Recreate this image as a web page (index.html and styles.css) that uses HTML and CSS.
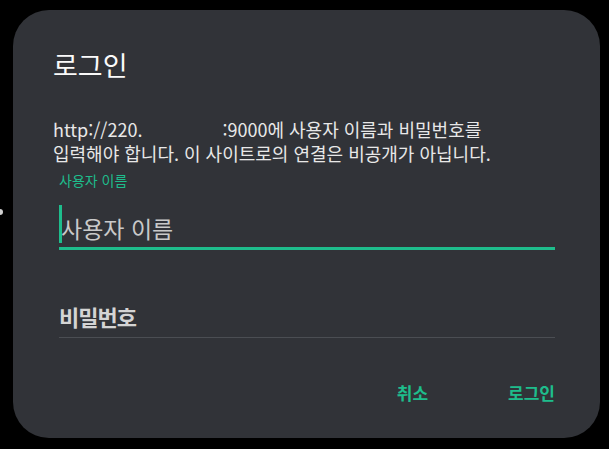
FILE: index.html
```html
<!DOCTYPE html>
<html lang="ko">
<head>
<meta charset="utf-8">
<link rel="stylesheet" href="styles.css">
</head>
<body>
<span class="edge-dot"></span>
<div class="dialog">
  <h1 class="title">로그인</h1>
  <p class="message">http://220.<span class="gap"></span>:9000에 사용자 이름과 비밀번호를<br>입력해야 합니다. 이 사이트로의 연결은 비공개가 아닙니다.</p>
  <div class="field active">
    <div class="float-label">사용자 이름</div>
    <div class="input"><span class="caret"></span><span class="placeholder">사용자 이름</span></div>
  </div>
  <div class="field">
    <div class="input"><span class="placeholder strong">비밀번호</span></div>
  </div>
  <div class="actions">
    <button class="btn">취소</button>
    <button class="btn">로그인</button>
  </div>
</div>
</body>
</html>
```

FILE: styles.css
```css
html, body {
  margin: 0;
  padding: 0;
  background: #000;
  width: 609px;
  height: 449px;
  overflow: hidden;
  font-family: "Noto Sans CJK KR", "Noto Sans", sans-serif;
}
.edge-dot {
  position: absolute;
  left: -3px;
  top: 209px;
  width: 6px;
  height: 6px;
  border-radius: 50%;
  background: #cfcfcf;
}
.dialog {
  margin: 10px 0 0 13px;
  width: 587px;
  height: 428px;
  box-sizing: border-box;
  background: #313338;
  border-radius: 36px;
  padding: 35px 45px 0 40px;
  display: flex;
  flex-direction: column;
}
.title {
  margin: 0;
  font-size: 27px;
  font-weight: 400;
  line-height: 40px;
  color: #fafafa;
}
.message {
  margin: 32px 0 0 0;
  font-size: 18px;
  line-height: 24px;
  color: #e8e8e8;
  white-space: nowrap;
}
.message .gap {
  display: inline-block;
  width: 80px;
}
.field {
  margin-left: 6px;
  border-bottom: 1px solid #4b4e53;
}
.field.active {
  border-bottom: 3px solid #1ebd8c;
  margin-top: 6px;
}
.float-label {
  font-size: 14px;
  line-height: 18px;
  color: #1ebd8c;
}
.input {
  display: flex;
  align-items: center;
  height: 44px;
}
.field.active .input {
  height: 46px;
  margin-top: 12px;
}
.caret {
  width: 3px;
  height: 38px;
  background: #1ebd8c;
  margin-right: -1px;
}
.placeholder {
  font-size: 23px;
  color: #c9c9c9;
  padding-top: 8px;
}
.placeholder.strong {
  font-size: 22px;
  font-weight: 700;
  letter-spacing: -1px;
  color: #d4d4d4;
  padding-top: 2px;
}
.field:not(.active) {
  margin-top: 43px;
}
.actions {
  margin-top: 42px;
  display: flex;
  justify-content: flex-end;
  gap: 80px;
}
.btn {
  background: none;
  border: none;
  padding: 0;
  font-family: inherit;
  font-size: 17px;
  font-weight: 700;
  color: #1ebd8c;
}
```
